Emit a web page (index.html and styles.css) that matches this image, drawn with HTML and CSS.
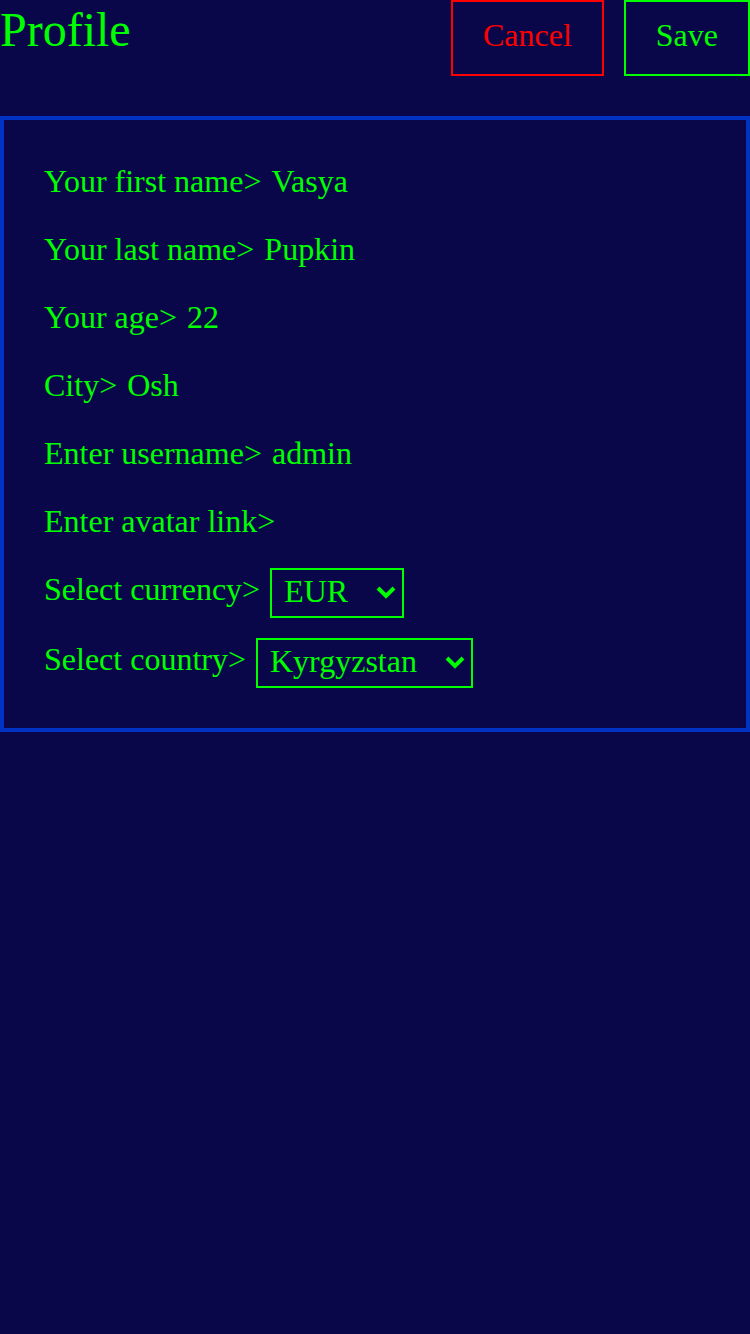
FILE: index.html
```html
<!DOCTYPE html>
<html lang="en">
<head>
<meta charset="utf-8">
<meta name="viewport" content="width=device-width, initial-scale=1">
<title>Profile</title>
<link rel="stylesheet" href="styles.css">
</head>
<body>
<form class="page">
  <header class="header">
    <h1 class="title">Profile</h1>
    <div class="actions">
      <button class="button button-cancel" type="button">Cancel</button>
      <button class="button" type="submit">Save</button>
    </div>
  </header>
  <main class="panel">
    <div class="row">
      <label class="label" for="first-name">Your first name&gt;</label>
      <input class="field" id="first-name" type="text" value="Vasya">
    </div>
    <div class="row">
      <label class="label" for="last-name">Your last name&gt;</label>
      <input class="field" id="last-name" type="text" value="Pupkin">
    </div>
    <div class="row">
      <label class="label" for="age">Your age&gt;</label>
      <input class="field" id="age" type="text" inputmode="numeric" value="22">
    </div>
    <div class="row">
      <label class="label" for="city">City&gt;</label>
      <input class="field" id="city" type="text" value="Osh">
    </div>
    <div class="row">
      <label class="label" for="username">Enter username&gt;</label>
      <input class="field" id="username" type="text" value="admin">
    </div>
    <div class="row">
      <label class="label" for="avatar">Enter avatar link&gt;</label>
      <input class="field" id="avatar" type="text">
    </div>
    <div class="row">
      <label class="label" for="currency">Select currency&gt;</label>
      <div class="picker">
        <select class="select" id="currency"><option>EUR</option></select>
        <svg class="chevron" viewBox="0 0 20 14" aria-hidden="true"><path d="M2 2l8 8 8-8"/></svg>
      </div>
    </div>
    <div class="row">
      <label class="label" for="country">Select country&gt;</label>
      <div class="picker">
        <select class="select" id="country"><option>Kyrgyzstan</option></select>
        <svg class="chevron" viewBox="0 0 20 14" aria-hidden="true"><path d="M2 2l8 8 8-8"/></svg>
      </div>
    </div>
  </main>
</form>
</body>
</html>
```

FILE: styles.css
```css
:root {
  --ink: #00ff00;
  --danger: #ff0000;
  --back: #090749;
  --frame: #0033c4;
}

* {
  box-sizing: border-box;
}

body {
  margin: 0;
  background: var(--back);
  color: var(--ink);
  font: 32px/42px "Liberation Serif", "Times New Roman", serif;
}

.page {
  display: flex;
  flex-direction: column;
  gap: 40px;
}

.header {
  display: flex;
  justify-content: space-between;
  align-items: flex-start;
}

.title {
  margin: 0;
  font-size: 48px;
  font-weight: 400;
  line-height: 60px;
}

.actions {
  display: flex;
  gap: 20px;
}

.button {
  padding: 12px 30px 18px;
  border: 2px solid currentColor;
  border-radius: 0;
  background: none;
  color: var(--ink);
  font: inherit;
  cursor: pointer;
}

.button-cancel {
  color: var(--danger);
}

.panel {
  display: flex;
  flex-direction: column;
  gap: 20px;
  padding: 40px;
  border: 4px solid var(--frame);
}

.row {
  display: flex;
  align-items: flex-start;
  gap: 10px;
  min-height: 48px;
}

.label {
  white-space: nowrap;
}

.field {
  flex: 1;
  min-width: 0;
  height: 42px;
  padding: 0;
  border: 0;
  outline: 0;
  background: none;
  color: inherit;
  font: inherit;
}

.picker {
  display: grid;
  align-items: center;
}

.select {
  grid-area: 1 / 1;
  appearance: none;
  padding: 0 54px 4px 12px;
  border: 2px solid var(--ink);
  border-radius: 0;
  background: none;
  color: inherit;
  font: inherit;
}

.chevron {
  grid-area: 1 / 1;
  justify-self: end;
  width: 20px;
  height: 14px;
  margin-right: 8px;
  fill: none;
  stroke: var(--ink);
  stroke-width: 4px;
  pointer-events: none;
}
```
